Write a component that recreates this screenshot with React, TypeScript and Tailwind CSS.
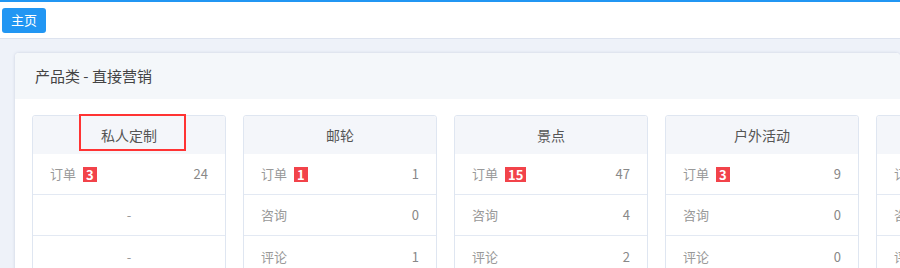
import React from "react";

const cards = [
  { title: "私人定制", order: 3, orderCount: "24", rows: null },
  { title: "邮轮", order: 1, orderCount: "1", rows: ["0", "1"] },
  { title: "景点", order: 15, orderCount: "47", rows: ["4", "2"] },
  { title: "户外活动", order: 3, orderCount: "9", rows: ["0", "0"] },
  { title: "酒店", order: 2, orderCount: "5", rows: ["0", "0"] },
];

function Card({ card, marked }: { card: (typeof cards)[number]; marked?: boolean }) {
  return (
    <div className="relative w-[194px] shrink-0 rounded-[3px] border border-[#dfe6f1] bg-white">
      {/* header */}
      <div className="flex h-[38px] items-center justify-center rounded-t-[3px] bg-[#f4f6fa] text-[14px] text-[#555]">
        {card.title}
      </div>
      {marked && (
        <div className="absolute left-[46px] top-[-2px] h-[37px] w-[107px] border-2 border-[#ff3333]" />
      )}
      {/* order row */}
      <div className="flex h-[41px] items-center justify-between border-b border-[#e3e9f3] px-[17px] text-[13px] text-[#999]">
        <span className="flex items-center">
          订单
          <span className="ml-[7px] bg-[#f2434a] px-[3px] text-[13px] font-bold leading-[15px] text-white">
            {card.order}
          </span>
        </span>
        <span className="text-[#888]">{card.orderCount}</span>
      </div>
      {card.rows ? (
        <>
          <div className="flex h-[41px] items-center justify-between border-b border-[#e3e9f3] px-[17px] text-[13px] text-[#999]">
            <span>咨询</span>
            <span className="text-[#888]">{card.rows[0]}</span>
          </div>
          <div className="flex h-[41px] items-center justify-between px-[17px] text-[13px] text-[#999]">
            <span>评论</span>
            <span className="text-[#888]">{card.rows[1]}</span>
          </div>
        </>
      ) : (
        <>
          <div className="flex h-[41px] items-center justify-center border-b border-[#e3e9f3] text-[13px] text-[#999]">
            -
          </div>
          <div className="flex h-[41px] items-center justify-center text-[13px] text-[#999]">-</div>
        </>
      )}
    </div>
  );
}

export default function App() {
  return (
    <div
      className="h-[268px] w-[900px] overflow-hidden bg-[#eef2f9]"
      style={{ fontFamily: '"Noto Sans CJK SC", "Noto Sans", sans-serif' }}
    >
      {/* top bar */}
      <div className="border-t-2 border-[#2196f3] bg-white">
        <div className="flex h-[37px] items-center border-b border-[#dde3ef] px-[2px]">
          <button className="h-[25px] rounded-[3px] bg-[#2196f3] px-[9px] text-[13px] text-white">主页</button>
        </div>
      </div>

      {/* panel */}
      <div className="ml-[15px] mt-[14px] rounded-[4px] bg-white shadow-[0_0_3px_rgba(80,90,140,0.25)]">
        <div className="flex h-[46px] items-center rounded-t-[4px] bg-[#f4f7fa] px-[20px] text-[15px] text-[#444]">
          产品类 - 直接营销
        </div>
        <div className="flex gap-[17px] pl-[17px] pt-[16px]">
          {cards.map((c, i) => (
            <Card key={i} card={c} marked={i === 0} />
          ))}
        </div>
      </div>
    </div>
  );
}
